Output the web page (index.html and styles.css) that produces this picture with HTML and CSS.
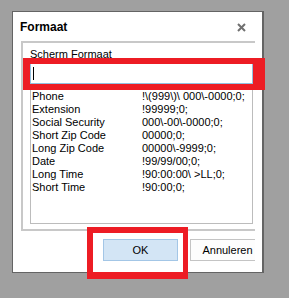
FILE: index.html
```html
<!DOCTYPE html>
<html>
<head>
<meta charset="utf-8">
<link rel="stylesheet" href="styles.css">
</head>
<body>
<div class="dialog">
  <div class="clip">
    <div class="titlebar">
      <span class="title">Formaat</span>
      <svg class="close" width="9" height="9" viewBox="0 0 9 9"><path d="M1 1 L8 8 M8 1 L1 8" stroke="#707070" stroke-width="2" fill="none"/></svg>
    </div>
    <div class="group">
      <div class="label">Scherm Formaat</div>
      <div class="input"><span class="caret"></span></div>
      <div class="list">
        <div class="row"><span>Phone</span><span>!\(999\)\ 000\-0000;0;</span></div>
        <div class="row"><span>Extension</span><span>!99999;0;</span></div>
        <div class="row"><span>Social Security</span><span>000\-00\-0000;0;</span></div>
        <div class="row"><span>Short Zip Code</span><span>00000;0;</span></div>
        <div class="row"><span>Long Zip Code</span><span>00000\-9999;0;</span></div>
        <div class="row"><span>Date</span><span>!99/99/00;0;</span></div>
        <div class="row"><span>Long Time</span><span>!90:00:00\ &gt;LL;0;</span></div>
        <div class="row"><span>Short Time</span><span>!90:00;0;</span></div>
      </div>
    </div>
    <div class="buttons">
      <div class="btn btn-ok">OK</div>
      <div class="btn btn-cancel">Annuleren</div>
    </div>
  </div>
</div>
<div class="mark mark-input"></div>
<div class="mark mark-ok"></div>
</body>
</html>
```
FILE: styles.css
```css
html, body {
  margin: 0;
  padding: 0;
  background: #a0a0a0;
  font-family: "Liberation Sans", Arial, sans-serif;
  font-size: 11px;
  color: #000;
}
body {
  position: relative;
  width: 289px;
  height: 298px;
  overflow: hidden;
}
.dialog {
  margin: 11px 0 0 12px;
  width: 249px;
  height: 260px;
  border: 1px solid #646464;
  border-right-width: 2px;
  background: #fff;
}
.clip {
  width: 242px;
  height: 100%;
  overflow: hidden;
}
.titlebar {
  height: 29px;
  display: flex;
  align-items: center;
  justify-content: space-between;
  padding-left: 7px;
  padding-right: 9px;
  padding-top: 1px;
  box-sizing: border-box;
}
.title {
  font-weight: bold;
  font-size: 12px;
  line-height: 15px;
}
.close {
  display: block;
}
.group {
  margin-left: 8px;
  border: 2px solid #c8c8c8;
  border-right: none;
  padding: 0 0 5px 7px;
}
.label {
  margin-top: 4px;
  line-height: 14px;
  height: 14px;
  margin-bottom: 2px;
}
.input {
  width: 221px;
  height: 19px;
  border: 1px solid #92c0e0;
  display: flex;
  align-items: center;
}
.caret {
  display: block;
  width: 1px;
  height: 13px;
  background: #000;
  margin-left: 2px;
}
.list {
  width: 221px;
  height: 139px;
  border: 1px solid #bcbcbc;
  border-top: none;
  padding: 6px 0 0 1px;
  box-sizing: border-box;
  width: 223px;
  height: 140px;
}
.row {
  display: grid;
  grid-template-columns: 110px 1fr;
  line-height: 13px;
  height: 13px;
  white-space: nowrap;
}
.buttons {
  display: flex;
  gap: 12px;
  margin-top: 8px;
  padding-left: 90px;
}
.btn {
  flex: none;
  width: 75px;
  height: 22px;
  box-sizing: border-box;
  display: flex;
  align-items: center;
  justify-content: center;
}
.btn-ok {
  background: #d3e5f5;
  border: 1px solid #a3c6e6;
}
.btn-cancel {
  background: #fdfdfd;
  border: 1px solid #c4c4c4;
}
.mark {
  position: absolute;
  border: 6px solid #ed1c24;
  box-sizing: border-box;
}
.mark-input {
  left: 23px;
  top: 58px;
  width: 242px;
  height: 32px;
  border-left-width: 7px;
  border-right-width: 12px;
}
.mark-ok {
  left: 87px;
  top: 227px;
  width: 101px;
  height: 52px;
  border-right-width: 5px;
  border-bottom-width: 7px;
}
```
